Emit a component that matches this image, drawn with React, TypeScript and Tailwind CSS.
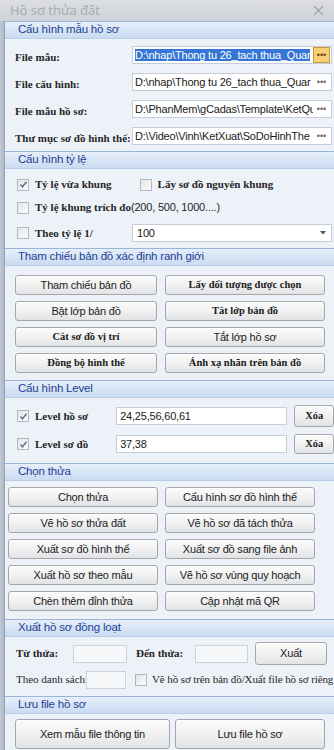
import React from "react";

const sans = "font-['Liberation_Sans',Arial,sans-serif] tracking-[-0.2px]";
const serif = "font-['Liberation_Serif','Times_New_Roman',serif]";

function Header({ title }: { title: string }) {
  return (
    <div
      className={`h-[18px] shrink-0 flex items-center pl-[13px] border-t border-b border-t-[#9bb5da] border-b-[#b9cde8] bg-gradient-to-b from-[#e6effa] to-[#cadbf1] text-[11.5px] text-[#1c3f94] ${sans}`}
    >
      {title}
    </div>
  );
}

function Btn({
  children,
  className = "",
  serifText = false,
}: {
  children: React.ReactNode;
  className?: string;
  serifText?: boolean;
}) {
  return (
    <div
      className={`flex items-center justify-center whitespace-nowrap rounded-[3px] border border-[#a4a6a9] bg-gradient-to-b from-[#fbfbfb] via-[#f1f1f1] to-[#e2e3e5] shadow-[inset_0_1px_0_#ffffff] text-[#1b1b1b] ${
        serifText ? `${serif} text-[10.5px] font-bold` : `${sans} text-[11px]`
      } ${className}`}
    >
      {children}
    </div>
  );
}

function Check({ checked = false }: { checked?: boolean }) {
  return (
    <div className="w-[12px] h-[12px] shrink-0 border border-[#b3b8bf] bg-gradient-to-br from-[#e3e6ea] to-[#fbfbfc] flex items-center justify-center">
      {checked && (
        <svg width="9" height="9" viewBox="0 0 9 9">
          <path d="M1.5 4.5 L3.5 6.8 L7.5 1.8" fill="none" stroke="#5d6f8a" strokeWidth="1.4" />
        </svg>
      )}
    </div>
  );
}

function Label({ children, className = "" }: { children: React.ReactNode; className?: string }) {
  return <span className={`${serif} text-[11px] font-bold text-[#262626] whitespace-nowrap ${className}`}>{children}</span>;
}

function PathRow({ label, value, active = false }: { label: string; value: string; active?: boolean }) {
  return (
    <div className="h-[18px] flex items-center">
      <div className="w-[123px] pl-[10px] shrink-0">
        <Label>{label}</Label>
      </div>
      <div className="ml-[4px] w-[200px] h-full flex items-center border border-[#c7cdd6] bg-white">
        <div className={`w-[180px] overflow-hidden whitespace-nowrap pl-[2px] ${sans} text-[11px] text-[#1a1a1a]`}>
          <span className={active ? "bg-[#3575d6] text-white" : ""}>{value}</span>
        </div>
        <div
          className={`w-[17px] h-full shrink-0 flex items-center justify-center font-['Liberation_Sans',sans-serif] text-[9px] leading-none ${
            active ? "bg-[#f8cf76] border border-[#c99a3c] text-[#6a4a10]" : "text-[#666]"
          }`}
        >
          •••
        </div>
      </div>
    </div>
  );
}

export default function App() {
  return (
    <div className="w-[334px] h-[750px] overflow-hidden flex flex-col bg-[#d3d6da]">
      {/* title bar */}
      <div className="h-[21px] shrink-0 flex items-center justify-between px-[10px] bg-gradient-to-b from-[#dcdee1] to-[#cfd2d6]">
        <span className="font-['Open_Sans',sans-serif] text-[13px] text-[#a5a8ad]">Hồ sơ thửa đất</span>
        <svg width="11" height="11" viewBox="0 0 11 11">
          <path d="M1 1 L10 10 M10 1 L1 10" stroke="#9da1a6" strokeWidth="1.2" />
        </svg>
      </div>

      <div className="flex-1 flex min-h-0">
        <div className="w-[5px] shrink-0 bg-gradient-to-r from-[#c4c9d0] to-[#aeb8c6] border-r border-[#8fa4c2]" />
        <div className="flex-1 flex flex-col bg-[#edf2f9] min-w-0">
          {/* Cấu hình mẫu hồ sơ */}
          <Header title="Cấu hình mẫu hồ sơ" />
          <div className="h-[112px] shrink-0 flex flex-col gap-[9px] pt-[7px]">
            <PathRow label="File mẫu:" value="D:\nhap\Thong tu 26_tach thua_Quar" active />
            <PathRow label="File cấu hình:" value="D:\nhap\Thong tu 26_tach thua_Quar" />
            <PathRow label="File mẫu hồ sơ:" value="D:\PhanMem\gCadas\Template\KetQu" />
            <PathRow label="Thư mục sơ đồ hình thể:" value="D:\Video\Vinh\KetXuat\SoDoHinhThe" />
          </div>

          {/* Cấu hình tỷ lệ */}
          <Header title="Cấu hình tỷ lệ" />
          <div className="h-[79px] shrink-0 flex flex-col pt-[9px] gap-[10px] pl-[12px]">
            <div className="h-[13px] flex items-center">
              <Check checked />
              <Label className="ml-[6px]">Tỷ lệ vừa khung</Label>
              <div className="ml-[28px] flex items-center">
                <Check />
                <Label className="ml-[6px]">Lấy sơ đồ nguyên khung</Label>
              </div>
            </div>
            <div className="h-[13px] flex items-center">
              <Check />
              <Label className="ml-[6px]">Tỷ lệ khung trích đo</Label>
              <span className={`${sans} text-[11px] text-[#262626]`}>(200, 500, 1000....)</span>
            </div>
            <div className="h-[18px] flex items-center">
              <Check />
              <Label className="ml-[6px] w-[90px]">Theo tỷ lệ 1/</Label>
              <div className="ml-[7px] w-[200px] h-[18px] flex items-center justify-between border border-[#c7cdd6] bg-white pl-[4px] pr-[5px]">
                <span className={`${sans} text-[11px] text-[#1a1a1a]`}>100</span>
                <svg width="6" height="4" viewBox="0 0 6 4">
                  <path d="M0 0 L6 0 L3 3.5 Z" fill="#555" />
                </svg>
              </div>
            </div>
          </div>

          {/* Tham chiếu bản đồ */}
          <Header title="Tham chiếu bản đồ xác định ranh giới" />
          <div className="h-[114px] shrink-0 grid grid-cols-[142px_160px] gap-x-[8px] gap-y-[6px] pt-[9px] pl-[10px] auto-rows-[20px]">
            <Btn>Tham chiếu bản đồ</Btn>
            <Btn serifText>Lấy đối tượng được chọn</Btn>
            <Btn>Bật lớp bản đồ</Btn>
            <Btn serifText>Tắt lớp bản đồ</Btn>
            <Btn serifText>Cắt sơ đồ vị trí</Btn>
            <Btn>Tắt lớp hồ sơ</Btn>
            <Btn serifText>Đồng bộ hình thể</Btn>
            <Btn serifText>Ánh xạ nhãn trên bản đồ</Btn>
          </div>

          {/* Cấu hình Level */}
          <Header title="Cấu hình Level" />
          <div className="h-[65px] shrink-0 flex flex-col pt-[8px] gap-[8px] pl-[12px]">
            <div className="h-[20px] flex items-center">
              <Check checked />
              <Label className="ml-[6px] w-[82px]">Level hồ sơ</Label>
              <div className={`w-[173px] h-[18px] border border-[#c7cdd6] bg-white flex items-center pl-[3px] ${sans} text-[11px] text-[#1a1a1a]`}>
                24,25,56,60,61
              </div>
              <Btn serifText className="ml-[7px] w-[40px] h-[22px]">Xóa</Btn>
            </div>
            <div className="h-[20px] flex items-center">
              <Check checked />
              <Label className="ml-[6px] w-[82px]">Level sơ đồ</Label>
              <div className={`w-[173px] h-[18px] border border-[#c7cdd6] bg-white flex items-center pl-[3px] ${sans} text-[11px] text-[#1a1a1a]`}>
                37,38
              </div>
              <Btn serifText className="ml-[7px] w-[40px] h-[20px]">Xóa</Btn>
            </div>
          </div>

          {/* Chọn thửa */}
          <Header title="Chọn thửa" />
          <div className="h-[138px] shrink-0 grid grid-cols-[150px_150px] gap-x-[7px] gap-y-[6px] pt-[6px] pl-[3px] auto-rows-[20px]">
            <Btn>Chọn thửa</Btn>
            <Btn>Cấu hình sơ đồ hình thể</Btn>
            <Btn>Vẽ hồ sơ thửa đất</Btn>
            <Btn>Vẽ hồ sơ đã tách thửa</Btn>
            <Btn>Xuất sơ đồ hình thể</Btn>
            <Btn>Xuất sơ đồ sang file ảnh</Btn>
            <Btn>Xuất hồ sơ theo mẫu</Btn>
            <Btn>Vẽ hồ sơ vùng quy hoạch</Btn>
            <Btn>Chèn thêm đỉnh thửa</Btn>
            <Btn>Cập nhật mã QR</Btn>
          </div>

          {/* Xuất hồ sơ đồng loạt */}
          <Header title="Xuất hồ sơ đồng loạt" />
          <div className="h-[59px] shrink-0 flex flex-col pt-[5px] gap-[5px] pl-[11px]">
            <div className="h-[23px] flex items-center">
              <Label className="w-[57px]">Từ thửa:</Label>
              <div className="w-[54px] h-[18px] border border-[#cdd2d9] bg-[#f6f7f9]" />
              <Label className="ml-[9px] w-[59px]">Đến thửa:</Label>
              <div className="w-[53px] h-[18px] border border-[#cdd2d9] bg-[#f6f7f9]" />
              <Btn className="ml-[7px] w-[72px] h-[23px]">Xuất</Btn>
            </div>
            <div className="h-[19px] flex items-center whitespace-nowrap">
              <Label className="w-[70px] font-normal text-[10px]">Theo danh sách:</Label>
              <div className="w-[40px] h-[18px] shrink-0 border border-[#cdd2d9] bg-[#f6f7f9]" />
              <div className="ml-[9px]">
                <Check />
              </div>
              <Label className="ml-[5px] text-[10.5px] font-normal tracking-[-0.1px]">Vẽ hồ sơ trên bản đồ/Xuất file hồ sơ riêng</Label>
            </div>
          </div>

          {/* Lưu file hồ sơ */}
          <Header title="Lưu file hồ sơ" />
          <div className="flex-1 flex gap-[5px] pt-[5px] pl-[10px]">
            <Btn className="w-[155px] h-[30px]">Xem mẫu file thông tin</Btn>
            <Btn className="w-[150px] h-[30px]">Lưu file hồ sơ</Btn>
          </div>
        </div>
      </div>
    </div>
  );
}
